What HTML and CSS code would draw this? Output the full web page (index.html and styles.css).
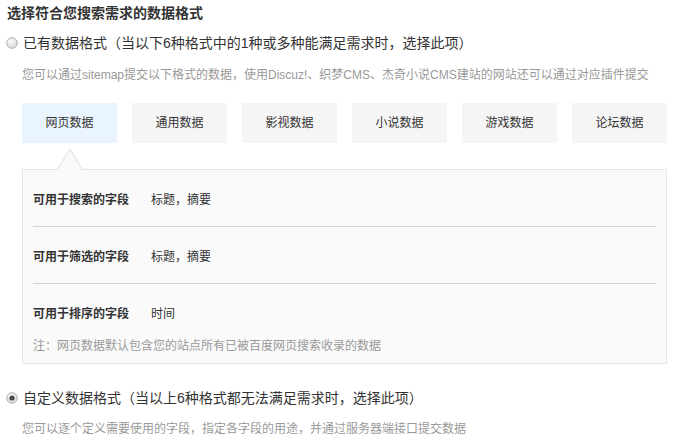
FILE: index.html
```html
<!DOCTYPE html>
<html lang="zh-CN">
<head>
<meta charset="utf-8">
<title>选择数据格式</title>
<link rel="stylesheet" href="styles.css">
</head>
<body>
<div class="page">
  <h3 class="title">选择符合您搜索需求的数据格式</h3>

  <label class="option option-first">
    <svg class="radio" width="12" height="12" viewBox="0 0 12 12">
      <defs>
        <radialGradient id="rg1" cx="40%" cy="35%" r="70%">
          <stop offset="0" stop-color="#fbfbfb"/>
          <stop offset="1" stop-color="#d6d6d6"/>
        </radialGradient>
      </defs>
      <circle cx="6" cy="6" r="5.3" fill="url(#rg1)" stroke="#a9a9a9" stroke-width="0.9"/>
    </svg>
    <span>已有数据格式（当以下6种格式中的1种或多种能满足需求时，选择此项）</span>
  </label>
  <p class="desc desc-first">您可以通过sitemap提交以下格式的数据，使用Discuz!、织梦CMS、杰奇小说CMS建站的网站还可以通过对应插件提交</p>

  <div class="tabs">
    <div class="tab tab-active">网页数据</div>
    <div class="tab">通用数据</div>
    <div class="tab">影视数据</div>
    <div class="tab">小说数据</div>
    <div class="tab">游戏数据</div>
    <div class="tab">论坛数据</div>
  </div>

  <div class="panel">
    <div class="row">
      <span class="label">可用于搜索的字段</span>
      <span class="value">标题，摘要</span>
    </div>
    <div class="row">
      <span class="label">可用于筛选的字段</span>
      <span class="value">标题，摘要</span>
    </div>
    <div class="row row-last">
      <span class="label">可用于排序的字段</span>
      <span class="value">时间</span>
    </div>
    <p class="note">注：网页数据默认包含您的站点所有已被百度网页搜索收录的数据</p>
  </div>

  <label class="option option-second">
    <svg class="radio" width="12" height="12" viewBox="0 0 12 12">
      <defs>
        <radialGradient id="rg2" cx="40%" cy="35%" r="70%">
          <stop offset="0" stop-color="#fbfbfb"/>
          <stop offset="1" stop-color="#d6d6d6"/>
        </radialGradient>
      </defs>
      <circle cx="6" cy="6" r="5.3" fill="url(#rg2)" stroke="#a9a9a9" stroke-width="0.9"/>
      <circle cx="6" cy="6" r="2.6" fill="#4a4a4a"/>
    </svg>
    <span>自定义数据格式（当以上6种格式都无法满足需求时，选择此项）</span>
  </label>
  <p class="desc desc-second">您可以逐个定义需要使用的字段，指定各字段的用途，并通过服务器端接口提交数据</p>
</div>
</body>
</html>
```

FILE: styles.css
```css
html, body {
  margin: 0;
  padding: 0;
  background: #ffffff;
}

body {
  font-family: "Liberation Sans", Arial, "Noto Sans CJK SC", sans-serif;
  color: #333333;
}

.page {
  padding: 3px 0 0 7px;
  width: 660px;
}

.title {
  margin: 0;
  font-size: 14px;
  font-weight: bold;
  line-height: 20px;
  color: #333333;
}

.option {
  display: flex;
  align-items: center;
  height: 20px;
  font-size: 14px;
  line-height: 20px;
  color: #333333;
}

.option-first {
  margin-top: 10px;
}

.option-second {
  margin-top: 24px;
}

.radio {
  flex: none;
  width: 12px;
  height: 12px;
  margin-right: 5px;
  margin-left: -1px;
}

.desc {
  margin: 14px 0 0 15px;
  font-size: 12px;
  line-height: 16px;
  color: #999999;
  white-space: nowrap;
}

.desc-second {
  margin-top: 13px;
}

.tabs {
  display: flex;
  gap: 15px;
  margin: 20px 0 0 15px;
}

.tab {
  flex: none;
  width: 95px;
  height: 40px;
  line-height: 40px;
  text-align: center;
  font-size: 12px;
  color: #333333;
  background: #f5f5f5;
}

.tab-active {
  background: #e9f4fe;
}

.panel {
  position: relative;
  margin: 26px 0 0 15px;
  width: 623px;
  padding: 0 10px 11px;
  background: #fafafa;
  border: 1px solid #e6e6e6;
}

.panel::before,
.panel::after {
  content: "";
  position: absolute;
  left: 34px;
  width: 0;
  height: 0;
  border-left: 13px solid transparent;
  border-right: 13px solid transparent;
}

.panel::before {
  top: -22px;
  border-bottom: 21px solid #e6e6e6;
}

.panel::after {
  top: -20px;
  left: 35px;
  border-left-width: 12px;
  border-right-width: 12px;
  border-bottom: 20px solid #fafafa;
}

.row {
  display: flex;
  align-items: center;
  height: 56px;
  font-size: 12px;
  border-bottom: 1px solid #d3d3d3;
}

.row-last {
  border-bottom: none;
}

.label {
  width: 118px;
  flex: none;
  font-weight: bold;
  color: #333333;
}

.value {
  color: #333333;
}

.note {
  margin: 0;
  font-size: 12px;
  line-height: 12px;
  color: #999999;
}
```
